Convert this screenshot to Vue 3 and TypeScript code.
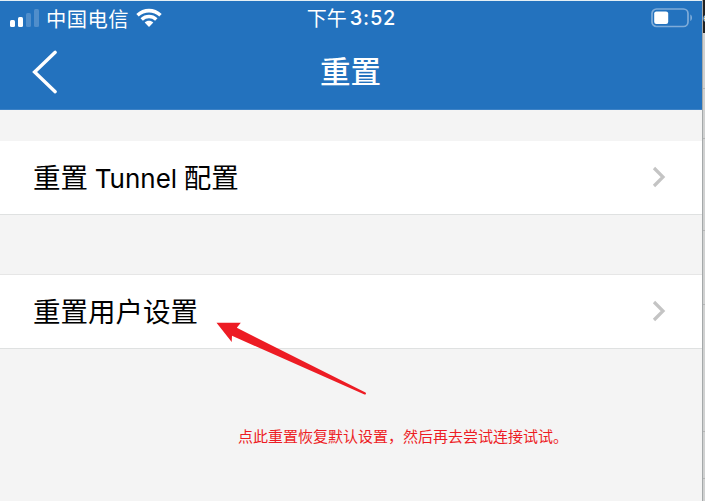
<script setup lang="ts">
const bars: string[] = ['b1', 'b2', 'b3 dim', 'b4 dim']
</script>

<template>
  <div class="screen">
    <main class="phone">
      <header class="header">
        <div class="status">
          <div class="carrier">
            <div class="signal"><i v-for="b in bars" :key="b" :class="b"></i></div>
            <span class="carrier-name">中国电信</span>
            <svg class="wifi" width="26" height="20" viewBox="0 0 26 20">
              <path d="M0.3 6.1C7.4-.9 18.6-.9 25.7 6.1L23.3 8.6C17.5 3 8.5 3 2.7 8.6Z" />
              <path d="M4.5 10.3C9.3 5.7 16.7 5.7 21.5 10.3L19.1 12.8C15.6 9.5 10.4 9.5 6.9 12.8Z" />
              <path d="M8.7 14.5C11.1 12.2 14.9 12.2 17.3 14.5L13 18.9Z" />
            </svg>
          </div>
          <div class="time"><span>下午</span><span class="digits">3:52</span></div>
          <svg class="battery" width="42" height="20" viewBox="0 0 42 20">
            <rect x="1" y="1" width="36" height="17.5" rx="4.5" class="shell" />
            <rect x="3.2" y="3.4" width="14" height="12.6" rx="2.2" fill="#fff" />
            <path d="M39.3 6.5C41.6 7.5 41.6 12 39.3 13Z" fill="#7facd9" />
          </svg>
        </div>
        <nav class="nav">
          <svg class="back" width="26" height="46" viewBox="0 0 26 46">
            <path d="M23.2 3.3L2.6 23L23.2 42.7" />
          </svg>
          <h1>重置</h1>
        </nav>
      </header>

      <section class="row first">
        <span class="label">重置 <span class="latin">Tunnel</span> 配置</span>
        <svg class="chevron" width="14" height="22" viewBox="0 0 14 22">
          <path d="M2 2L11 11L2 20" />
        </svg>
      </section>
      <section class="row second">
        <span class="label">重置用户设置</span>
        <svg class="chevron" width="14" height="22" viewBox="0 0 14 22">
          <path d="M2 2L11 11L2 20" />
        </svg>
      </section>
      <p class="note">点此重置恢复默认设置，然后再去尝试连接试试。</p>

      <svg class="arrow" width="152" height="75" viewBox="0 0 152 75">
        <path d="M0.5 0.8H24.8L20.8 5.8L149.5 70.6C150.5 71.3 149.8 72.9 148.5 72.4L16 13.8L15.7 20Z" />
      </svg>
    </main>
    <aside class="edge">
      <div class="tab">e</div>
      <div class="line l1"></div>
      <div class="line l2"></div>
      <div class="line l3"></div>
      <div class="line l4"></div>
      <div class="line l5"></div>
      <div class="line l6"></div>
    </aside>
  </div>
</template>

<style>
body {
  margin: 0;
}
</style>

<style scoped>
.screen {
  display: flex;
  width: 705px;
  height: 501px;
  overflow: hidden;
  font-family: "Noto Sans CJK SC", sans-serif;
}
.phone {
  position: relative;
  width: 702px;
  background: #f4f4f4;
}
.header {
  box-sizing: border-box;
  height: 110px;
  border-top: 1px solid #e4eff5;
  border-bottom: 1px solid #3d82c6;
  background: #2372be;
  color: #fff;
}
.status {
  display: grid;
  grid-template-columns: 1fr auto 1fr;
  align-items: center;
  height: 34px;
  padding: 0 9px 0 10px;
}
.carrier {
  display: flex;
  align-items: center;
}
.signal {
  display: flex;
  align-items: flex-end;
  gap: 3px;
  height: 18px;
  margin-right: 7px;
}
.signal i {
  width: 5px;
  border-radius: 1.5px;
  background: #fff;
}
.signal .b1 { height: 7px; }
.signal .b2 { height: 10px; }
.signal .b3 { height: 14px; }
.signal .b4 { height: 18px; }
.signal .dim { background: #508ecb; }
.carrier-name {
  font-size: 20.3px;
  line-height: 34px;
  letter-spacing: 0.5px;
}
.wifi {
  margin-left: 7px;
  fill: #fff;
}
.time {
  display: flex;
  align-items: center;
  gap: 3px;
  font-size: 20px;
  line-height: 34px;
}
.digits {
  font-family: Inter, sans-serif;
  font-weight: 500;
  letter-spacing: 0.8px;
}
.battery {
  justify-self: end;
}
.shell {
  fill: none;
  stroke: #7facd9;
  stroke-width: 1.7;
}
.nav {
  display: grid;
  grid-template-columns: 1fr auto 1fr;
  align-items: center;
  height: 74px;
  padding: 0 33px 0 32px;
}
.back path {
  fill: none;
  stroke: #fff;
  stroke-width: 3.4;
  stroke-linecap: round;
}
h1 {
  margin: 0;
  padding-bottom: 5px;
  font-size: 30.5px;
  font-weight: 500;
  line-height: 40px;
}
.row {
  box-sizing: border-box;
  display: flex;
  align-items: center;
  justify-content: space-between;
  padding: 0 36px 1px 33px;
  border-bottom: 1px solid #dfe1e1;
  background: #fff;
  color: #000;
}
.first {
  height: 74px;
  margin-top: 31px;
}
.second {
  height: 75px;
  margin-top: 59px;
  border-top: 1px solid #e6e6e6;
}
.label {
  font-size: 27.5px;
  line-height: 40px;
  white-space: nowrap;
}
.second .label {
  padding-bottom: 2px;
}
.latin {
  margin: 0 0.5px;
  font-family: Inter, sans-serif;
  font-size: 26px;
}
.chevron path {
  fill: none;
  stroke: #c4c4c4;
  stroke-width: 3.2;
}
.note {
  margin: 75px 0 0 238px;
  color: #ed1c24;
  font-size: 15px;
  line-height: 24px;
}
.arrow {
  position: absolute;
  left: 216px;
  top: 322px;
  fill: #ed1c24;
}
.edge {
  box-sizing: border-box;
  width: 3px;
  overflow: hidden;
  border-left: 1px solid #a5a9aa;
  background: #d0d1d1;
}
.tab {
  height: 33px;
  background: #222;
  color: #ddd;
  font: 12px/36px "Liberation Sans", sans-serif;
}
.line {
  height: 1px;
  background: #b4b5b5;
}
.l1 { margin-top: 55px; }
.l2 { margin-top: 49px; }
.l3 { margin-top: 91px; }
.l4 { margin-top: 73px; }
.l5 { margin-top: 126px; }
.l6 { margin-top: 46px; }
</style>
